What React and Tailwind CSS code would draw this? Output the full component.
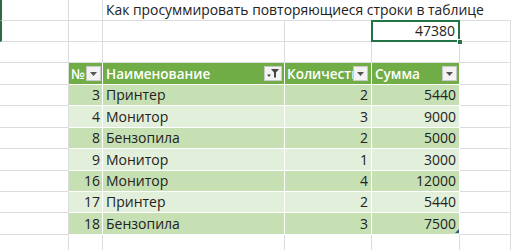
import React from "react";

const F = { fontFamily: "'Open Sans', 'Noto Sans', sans-serif" };

const data = [
  [3, "Принтер", 2, 5440],
  [4, "Монитор", 3, 9000],
  [8, "Бензопила", 2, 5000],
  [9, "Монитор", 1, 3000],
  [16, "Монитор", 4, 12000],
  [17, "Принтер", 2, 5440],
  [18, "Бензопила", 3, 7500],
];

const heights = [21, 21, 21, 22, 21, 22, 21, 22, 21, 21, 22, 20];

function DropBtn() {
  return (
    <div className="w-[15px] h-[15px] shrink-0 bg-[#f3f3f3] border border-[#c9c9c9] flex items-center justify-center">
      <svg width="7" height="4" viewBox="0 0 7 4"><path d="M0 0h7L3.5 4z" fill="#555" /></svg>
    </div>
  );
}

function FilterBtn() {
  return (
    <div className="w-[18px] h-[15px] shrink-0 bg-[#f3f3f3] border border-[#c9c9c9] flex items-center justify-center">
      <svg width="13" height="9" viewBox="0 0 13 9">
        <path d="M0 5.5h4L2 8z" fill="#444" />
        <path d="M4 0h8L9 3.5V8.5H7V3.5z" fill="#444" />
      </svg>
    </div>
  );
}

const G = "border-r border-b border-[#dadcdd]";
const W = "border-r border-b border-white";

export default function App() {
  return (
    <div className="w-[511px] h-[250px] overflow-hidden bg-white text-[#222] text-[14px] leading-[18px]" style={F}>
      {/* row 0 title */}
      <div className="flex" style={{ height: heights[0] }}>
        <div className={`w-[69px] shrink-0 ${G} border-l-2 border-l-[#2e6b45]`} />
        <div className={`w-[34px] shrink-0 ${G}`} />
        <div className="flex-1 border-b border-[#dadcdd] pl-[3px] flex items-center whitespace-nowrap text-[13.9px] leading-[18px]">
          Как просуммировать повторяющиеся строки в таблице
        </div>
      </div>
      {/* row 1 */}
      <div className="flex" style={{ height: heights[1] }}>
        <div className={`w-[69px] shrink-0 ${G} border-l-2 border-l-[#2e6b45]`} />
        <div className={`w-[34px] shrink-0 ${G}`} />
        <div className={`w-[182px] shrink-0 ${G}`} />
        <div className={`w-[87px] shrink-0 ${G}`} />
        <div className="w-[88px] shrink-0 relative border-r border-b border-[#dadcdd]">
          <div className="absolute left-[-1px] top-[-1px] right-[-1px] bottom-[-1px] border-2 border-[#217346] flex items-center justify-end pr-[3px]">
            47380
          </div>
          <div className="absolute right-[-4px] bottom-[-4px] w-[6px] h-[6px] bg-[#217346] border border-white" />
        </div>
        <div className={`flex-1 ${G}`} />
      </div>
      {/* row 2 */}
      <div className="flex" style={{ height: heights[2] }}>
        <div className={`w-[69px] shrink-0 ${G}`} />
        <div className={`w-[34px] shrink-0 ${G}`} />
        <div className={`w-[182px] shrink-0 ${G}`} />
        <div className={`w-[87px] shrink-0 ${G}`} />
        <div className={`w-[88px] shrink-0 ${G}`} />
        <div className={`flex-1 ${G}`} />
      </div>
      {/* header */}
      <div className="flex text-[13.5px]" style={{ height: heights[3] }}>
        <div className={`w-[69px] shrink-0 ${G}`} />
        <div className={`w-[34px] shrink-0 ${W} bg-[#70ad47] text-white font-semibold flex items-center pl-[2px] pr-[1px] overflow-hidden`}>
          <span className="flex-1 overflow-hidden whitespace-nowrap">№</span>
          <DropBtn />
        </div>
        <div className={`w-[182px] shrink-0 ${W} bg-[#70ad47] text-white font-semibold flex items-center pl-[3px] pr-[2px]`}>
          <span className="flex-1 overflow-hidden whitespace-nowrap">Наименование</span>
          <FilterBtn />
        </div>
        <div className={`w-[87px] shrink-0 ${W} bg-[#70ad47] text-white font-semibold flex items-center pl-[2px] pr-[3px]`}>
          <span className="flex-1 overflow-hidden whitespace-nowrap">Количество</span>
          <DropBtn />
        </div>
        <div className={`w-[88px] shrink-0 ${W} bg-[#70ad47] text-white font-semibold flex items-center pl-[3px] pr-[2px]`}>
          <span className="flex-1 overflow-hidden whitespace-nowrap">Сумма</span>
          <DropBtn />
        </div>
        <div className={`flex-1 ${G}`} />
      </div>
      {data.map((r, i) => {
        const bg = i % 2 === 0 ? "bg-[#c6e0b4]" : "bg-[#e2efda]";
        return (
          <div key={i} className="flex" style={{ height: heights[4 + i] }}>
            <div className={`w-[69px] shrink-0 ${G}`} />
            <div className={`w-[34px] shrink-0 ${W} ${bg} flex items-center justify-end pr-[2px]`}>{r[0]}</div>
            <div className={`w-[182px] shrink-0 ${W} ${bg} flex items-center pl-[3px]`}>{r[1]}</div>
            <div className={`w-[87px] shrink-0 ${W} ${bg} flex items-center justify-end pr-[3px]`}>{r[2]}</div>
            <div className={`w-[88px] shrink-0 ${W} ${bg} flex items-center justify-end pr-[3px] relative`}>
              {r[3]}
              {i === data.length - 1 && (
                <svg className="absolute right-[0px] bottom-[1px]" width="4" height="4" viewBox="0 0 4 4">
                  <path d="M4 0V4H0z" fill="#2f5597" />
                </svg>
              )}
            </div>
            <div className={`flex-1 ${G}`} />
          </div>
        );
      })}
      <div className="flex" style={{ height: 30 }}>
        <div className={`w-[69px] shrink-0 ${G}`} />
        <div className={`w-[34px] shrink-0 ${G}`} />
        <div className={`w-[182px] shrink-0 ${G}`} />
        <div className={`w-[87px] shrink-0 ${G}`} />
        <div className={`w-[88px] shrink-0 ${G}`} />
        <div className={`flex-1 ${G}`} />
      </div>
    </div>
  );
}
